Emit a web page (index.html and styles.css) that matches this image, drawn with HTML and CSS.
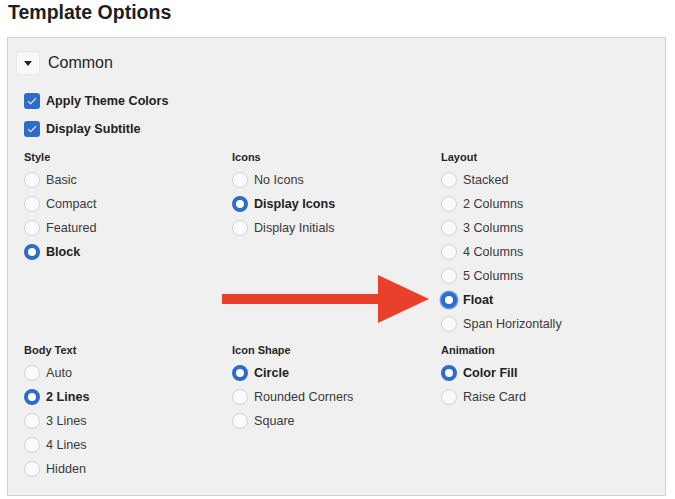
FILE: index.html
```html
<!DOCTYPE html>
<html>
<head>
<meta charset="utf-8">
<link rel="stylesheet" href="styles.css">
</head>
<body>
<h1 class="page-title">Template Options</h1>
<section class="panel">
  <div class="panel-head">
    <span class="toggle"><svg width="10" height="7" viewBox="0 0 10 7"><path d="M1 1h8L5 6z" fill="#222"/></svg></span>
    <span class="panel-title">Common</span>
  </div>
  <div class="checks">
    <label class="check"><span class="box"><svg width="10" height="8" viewBox="0 0 10 8"><path d="M1 4.2l2.6 2.6L9 1.2" fill="none" stroke="#fff" stroke-width="1.1"/></svg></span>Apply Theme Colors</label>
    <label class="check"><span class="box"><svg width="10" height="8" viewBox="0 0 10 8"><path d="M1 4.2l2.6 2.6L9 1.2" fill="none" stroke="#fff" stroke-width="1.1"/></svg></span>Display Subtitle</label>
  </div>
  <div class="grid">
    <div class="group">
      <div class="group-title">Style</div>
      <div class="opt"><span class="radio"></span>Basic</div>
      <div class="opt"><span class="radio"></span>Compact</div>
      <div class="opt"><span class="radio"></span>Featured</div>
      <div class="opt sel"><span class="radio"></span>Block</div>
    </div>
    <div class="group">
      <div class="group-title">Icons</div>
      <div class="opt"><span class="radio"></span>No Icons</div>
      <div class="opt sel"><span class="radio"></span>Display Icons</div>
      <div class="opt"><span class="radio"></span>Display Initials</div>
    </div>
    <div class="group">
      <div class="group-title">Layout</div>
      <div class="opt"><span class="radio"></span>Stacked</div>
      <div class="opt"><span class="radio"></span>2 Columns</div>
      <div class="opt"><span class="radio"></span>3 Columns</div>
      <div class="opt"><span class="radio"></span>4 Columns</div>
      <div class="opt"><span class="radio"></span>5 Columns</div>
      <div class="opt sel focus"><span class="radio"></span>Float</div>
      <div class="opt"><span class="radio"></span>Span Horizontally</div>
    </div>
    <div class="group">
      <div class="group-title">Body Text</div>
      <div class="opt"><span class="radio"></span>Auto</div>
      <div class="opt sel"><span class="radio"></span>2 Lines</div>
      <div class="opt"><span class="radio"></span>3 Lines</div>
      <div class="opt"><span class="radio"></span>4 Lines</div>
      <div class="opt"><span class="radio"></span>Hidden</div>
    </div>
    <div class="group">
      <div class="group-title">Icon Shape</div>
      <div class="opt sel"><span class="radio"></span>Circle</div>
      <div class="opt"><span class="radio"></span>Rounded Corners</div>
      <div class="opt"><span class="radio"></span>Square</div>
    </div>
    <div class="group">
      <div class="group-title">Animation</div>
      <div class="opt sel"><span class="radio"></span>Color Fill</div>
      <div class="opt"><span class="radio"></span>Raise Card</div>
    </div>
  </div>
  <svg class="arrow" width="208" height="50" viewBox="0 0 208 50"><path d="M0 19h156V0l51 24-51 24V29H0z" fill="#e8402a"/></svg>
</section>
</body>
</html>
```
FILE: styles.css
```css
html, body { margin: 0; padding: 0; background: #fff; }
body { font-family: "Liberation Sans", Arial, sans-serif; color: #333; }
.page-title {
  margin: 0;
  padding: 1px 0 0 8px;
  height: 36px;
  font-size: 19.5px;
  line-height: 22px;
  font-weight: bold;
  color: #1e1e1e;
}
.panel {
  position: relative;
  margin-left: 7px;
  width: 657px;
  height: 457px;
  background: #f0f0f0;
  border: 1px solid #d2d2d2;
  padding: 0;
}
.panel-head {
  display: flex;
  align-items: center;
  gap: 8px;
  margin: 13px 0 0 8px;
  height: 24px;
}
.toggle {
  width: 22px;
  height: 22px;
  border: 1px solid #e6e6e6;
  background: #f8f8f8;
  border-radius: 2px;
  display: flex;
  align-items: center;
  justify-content: center;
}
.panel-title { font-size: 16px; color: #262626; }
.checks {
  display: flex;
  flex-direction: column;
  gap: 4px;
  margin: 14px 0 0 16px;
}
.check {
  display: flex;
  align-items: center;
  gap: 6px;
  height: 24px;
  font-size: 12.6px;
  font-weight: bold;
  color: #222;
}
.box {
  width: 16px;
  height: 16px;
  border-radius: 3px;
  background: #2f6bc8;
  display: flex;
  align-items: center;
  justify-content: center;
}
.grid {
  display: grid;
  grid-template-columns: 208px 209px 200px;
  row-gap: 7px;
  margin: 9px 0 0 16px;
}
.group-title {
  height: 16px;
  line-height: 14px;
  font-size: 11px;
  font-weight: bold;
  color: #262626;
  margin-bottom: 2px;
}
.opt {
  display: flex;
  align-items: center;
  gap: 6px;
  height: 24px;
  font-size: 12.6px;
  color: #3a3a3a;
}
.radio {
  box-sizing: border-box;
  width: 16px;
  height: 16px;
  border-radius: 50%;
  background: #fafafa;
  border: 1px solid #d2d2d2;
  flex: none;
}
.opt.sel { font-weight: bold; color: #222; }
.opt.sel .radio { border: 4.5px solid #2f6bc8; background: #fff; }
.opt.focus .radio { box-shadow: 0 0 0 1.5px #6f9be6; }
.arrow {
  position: absolute;
  left: 214px;
  top: 237px;
}
```
